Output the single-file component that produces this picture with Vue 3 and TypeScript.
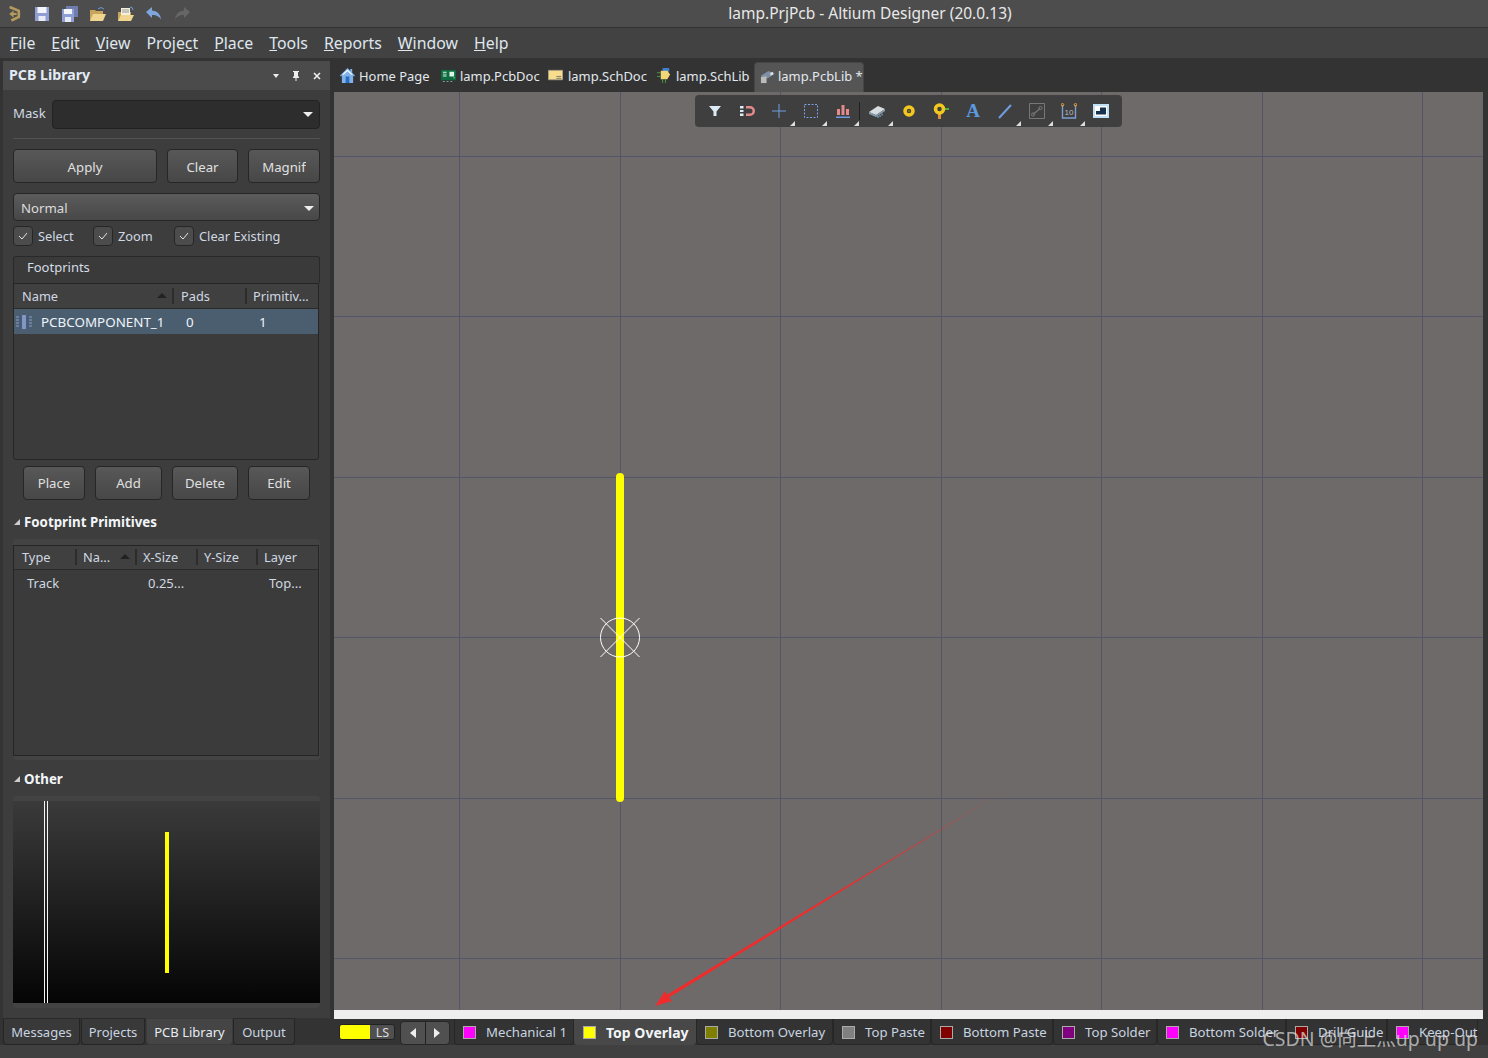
<script setup lang="ts">
const vLines: number[] = [459.5, 620.5, 780.5, 941.5, 1101.5, 1262.5, 1422.5]
const hLines: number[] = [156.5, 316.5, 477.5, 637.5, 798.5, 958.5]
const menus: [string, string][] = [['F', 'ile'], ['E', 'dit'], ['V', 'iew'], ['Proje', 'c|t'], ['P', 'lace'], ['T', 'ools'], ['R', 'eports'], ['W', 'indow'], ['H', 'elp']]
const layers = [
  { name: 'Mechanical 1', color: '#ff00ff', w: 120 },
  { name: 'Top Overlay', color: '#ffff00', active: true, w: 122 },
  { name: 'Bottom Overlay', color: '#808000', w: 137 },
  { name: 'Top Paste', color: '#808080', w: 98 },
  { name: 'Bottom Paste', color: '#800000', w: 122 },
  { name: 'Top Solder', color: '#800080', w: 104 },
  { name: 'Bottom Solder', color: '#ff00ff', w: 129 },
  { name: 'Drill Guide', color: '#800000', w: 101 },
  { name: 'Keep-Out', color: '#ff00ff', w: 91 },
]
const dockTabs = [
  { name: 'Messages', w: 77 },
  { name: 'Projects', w: 64 },
  { name: 'PCB Library', w: 87 },
  { name: 'Output', w: 62 },
]
</script>

<template>
  <div class="app">
    <header class="titlebar">
      <div class="quick">
        <svg class="qi logo" viewBox="0 0 16 20"><path d="M3 2.500L13.500 7v7L5 18" stroke="#b59a5e" stroke-width="3" fill="none"/><path d="M11 10.500H6" stroke="#b59a5e" stroke-width="2.400"/><path d="M7.500 6.500L2.500 10.500l5 4z" fill="#b59a5e"/></svg>
        <svg class="qi" viewBox="0 0 16 16"><path d="M1 1h14v14H1z" fill="#8f9fd6"/><path d="M3.500 1h9v6h-9z" fill="#f4f6fc"/><path d="M4.500 10h7v5h-7z" fill="#e8ebf6"/></svg>
        <svg class="qi" viewBox="0 0 16 16"><path d="M4 0h12v11H4z" fill="#6f7db0"/><path d="M0 3h12v13H0z" fill="#8f9fd6"/><path d="M2 3h8v5H2z" fill="#f4f6fc"/><path d="M3 11h6v5H3z" fill="#e8ebf6"/></svg>
        <svg class="qi" viewBox="0 0 16 16"><path d="M0 4h5l1 1h7v10H0z" fill="#c9a45c"/><path d="M3 8h13l-3 7H0z" fill="#f0d591"/><path d="M8 3q3-3 6 0" stroke="#6f9bd8" fill="none"/></svg>
        <svg class="qi" viewBox="0 0 16 16"><path d="M0 6h13v9H0z" fill="#c9a45c"/><path d="M3 2h9v8H3z" fill="#f4f0e0"/><path d="M4 4h7M4 6h7" stroke="#999"/><path d="M3 9h13l-3 6H0z" fill="#f0d591"/><path d="M12 1q3 0 3 3" stroke="#6f9bd8" fill="none"/></svg>
        <svg class="qi" viewBox="0 0 16 16"><path d="M0 6l6-5v3.500q8 .5 9 9-3-5-9-4.500V12z" fill="#7ea6dc"/></svg>
        <svg class="qi" viewBox="0 0 16 16"><path d="M16 6l-6-5v3.500q-8 .5-9 9 3-5 9-4.500V12z" fill="#666"/></svg>
      </div>
      <div class="apptitle">lamp.PrjPcb - Altium Designer (20.0.13)</div>
    </header>
    <nav class="menubar">
      <span v-for="m in menus" :key="m[0] + m[1]" class="menu">
        <template v-if="m[1] === 'c|t'">Proje<u>c</u>t</template>
        <template v-else><u>{{ m[0] }}</u>{{ m[1] }}</template>
      </span>
    </nav>

    <main class="main">
      <aside class="leftcol">
        <section class="panel">
          <div class="panelhead">
            <b>PCB Library</b>
            <span class="panelctl">
              <i class="tri-down small"></i>
              <svg class="pin" viewBox="0 0 8 10"><path d="M1 0h6v1H6v4l1 1v1H4.500v3h-1V7H1V6l1-1V1H1z" fill="#eee"/></svg>
              <svg class="closex" viewBox="0 0 8 8"><path d="M1 1l6 6M7 1L1 7" stroke="#eee" stroke-width="1.600"/></svg>
            </span>
          </div>
          <div class="panelbody">
            <div class="maskrow">
              <span class="masklabel">Mask</span>
              <div class="maskinput"><i class="tri-down"></i></div>
            </div>
            <div class="sep"></div>
            <div class="btnrow top">
              <button class="btn apply">Apply</button>
              <button class="btn clear">Clear</button>
              <button class="btn magnif"><span>Magnif</span></button>
            </div>
            <div class="select"><span>Normal</span><i class="tri-down"></i></div>
            <div class="checks">
              <label class="check c1"><i class="box"><svg viewBox="0 0 10 8"><path d="M1 4l3 3 5-6" stroke="#e4e4e4" fill="none"/></svg></i>Select</label>
              <label class="check c2"><i class="box"><svg viewBox="0 0 10 8"><path d="M1 4l3 3 5-6" stroke="#e4e4e4" fill="none"/></svg></i>Zoom</label>
              <label class="check"><i class="box"><svg viewBox="0 0 10 8"><path d="M1 4l3 3 5-6" stroke="#e4e4e4" fill="none"/></svg></i>Clear Existing</label>
            </div>
            <div class="grouphead">Footprints</div>
            <div class="table fp">
              <div class="thead fpcols">
                <span class="th first">Name<i class="tri-up"></i></span>
                <span class="th">Pads</span>
                <span class="th">Primitiv...</span>
              </div>
              <div class="selrow fpcols">
                <span class="namecell">
                  <svg class="chip" viewBox="0 0 16 16"><path d="M3 1h10v14H3z" fill="#46597f"/><path d="M6 1h4v14H6z" fill="#8497bd"/><path d="M0 3h3M0 6h3M0 9h3M0 12h3M13 3h3M13 6h3M13 9h3M13 12h3" stroke="#8fa0b8"/></svg>
                  PCBCOMPONENT_1
                </span>
                <span class="cell-a">0</span>
                <span class="cell-b">1</span>
              </div>
            </div>
            <div class="btnrow bottom">
              <button class="btn place">Place</button>
              <button class="btn add">Add</button>
              <button class="btn delete">Delete</button>
              <button class="btn edit">Edit</button>
            </div>
            <div class="sechead fpprim"><i class="corner"></i>Footprint Primitives</div>
            <div class="wrap primwrap">
              <div class="table prim">
                <div class="thead primcols">
                  <span class="th first">Type</span>
                  <span class="th">Na...<i class="tri-up"></i></span>
                  <span class="th">X-Size</span>
                  <span class="th">Y-Size</span>
                  <span class="th">Layer</span>
                </div>
                <div class="primrow primcols">
                  <span>Track</span><span></span><span>0.25...</span><span></span><span>Top...</span>
                </div>
              </div>
            </div>
            <div class="sechead other"><i class="corner"></i>Other</div>
            <div class="wrap prevwrap">
              <div class="preview">
                <i class="wl a"></i><i class="wl b"></i><i class="yl"></i>
              </div>
            </div>
          </div>
        </section>
        <div class="docktabs">
          <span
            v-for="t in dockTabs"
            :key="t.name"
            class="docktab"
            :class="{ on: t.name === 'PCB Library' }"
            :style="{ width: t.w + 'px' }"
          >{{ t.name }}</span>
        </div>
      </aside>

      <div class="rightcol">
        <div class="docbar">
          <span class="doc home">
            <svg class="dicon" viewBox="0 0 16 16"><path d="M8 0L0 8l1 1 1-1v8h12V8l1 1 1-1-3-3V1h-2v2z" fill="#7fb2ea"/><path d="M6 9h4v7H6z" fill="#2c6cc0"/><path d="M8 1.500L2.500 7l1 .5L8 3.500l4.500 4 1-.5z" fill="#fff"/></svg>
            Home Page
          </span>
          <span class="doc pcb">
            <svg class="dicon" viewBox="0 0 16 16"><path d="M0 2h16v11H0z" fill="#0d6b3f"/><path d="M2 4h4v1H2zM2 6h4v1H2zM2 8h4v1H2zM9 4h5v5H9z" fill="#dff5e6"/><path d="M2 14h2v1H2zM6 14h2v1H6zM10 14h2v1h-2zM13 10h2v1h-2z" fill="#8fd0a8"/></svg>
            lamp.PcbDoc
          </span>
          <span class="doc sch">
            <svg class="dicon" viewBox="0 0 16 16"><path d="M.500 2.500h15v10H.500z" fill="#f6dc8b" stroke="#a8a188"/><path d="M9 9h5M9 11h5" stroke="#7a7a6a"/></svg>
            lamp.SchDoc
          </span>
          <span class="doc slib">
            <svg class="dicon" viewBox="0 0 16 16"><path d="M6 0h7v4H6z" fill="#3f7fd0"/><path d="M4 3h7l3 4-3 5H4z" fill="#f2d777"/><path d="M0 5h4M0 9h4M6 12v4M9 12v4" stroke="#4a9a4a"/></svg>
            lamp.SchLib
          </span>
          <span class="doc lib active">
            <svg class="dicon" viewBox="0 0 16 16"><path d="M1 7l8-5 7 3-8 5z" fill="#7c8fa6"/><path d="M1 8h6v7H1z" fill="#bbb"/><path d="M11 4l3-1v3l-3 1z" fill="#ddd"/></svg>
            lamp.PcbLib *
          </span>
        </div>

        <div class="canvas">
          <svg class="board" viewBox="334 92 1149 918">
            <defs>
              <linearGradient id="redfade" gradientUnits="userSpaceOnUse" x1="1012" y1="786" x2="655" y2="1005">
                <stop offset="0" stop-color="#ee2c2c" stop-opacity="0.3"/>
                <stop offset="0.5" stop-color="#ee2c2c" stop-opacity="1"/>
                <stop offset="1" stop-color="#ee2c2c" stop-opacity="1"/>
              </linearGradient>
            </defs>
            <line v-for="x in vLines" :key="'v' + x" :x1="x" :x2="x" y1="92" y2="1010" stroke="#55556a" />
            <line v-for="y in hLines" :key="'h' + y" :y1="y" :y2="y" x1="334" x2="1483" stroke="#55556a" />
            <line x1="620" x2="620" y1="477" y2="798" stroke="#ffff00" stroke-width="8" stroke-linecap="round" />
            <circle cx="620" cy="637.500" r="19.500" fill="none" stroke="#fff" />
            <path d="M600.500 618l39 39M639.500 618l-39 39" stroke="#fff" />
            <path d="M1012 786L669 997.500l3 3.500L655 1006l10-15 2 3.700z" fill="url(#redfade)" />
          </svg>
          <div class="toolbar">
            <span class="tb">
              <svg viewBox="0 0 16 16"><path d="M2 3h12L9.500 8.500V13h-3V8.500z" fill="#dcebf5"/></svg>
            </span>
            <span class="tb">
              <svg viewBox="0 0 16 16"><path d="M7 3h4a5 5 0 010 10H7v-2.500h4a2.500 2.500 0 000-5H7z" fill="#e48a8a"/><path d="M1 3h3.500v2.500H1zM1 7h3.500v2H1zM1 10.500h3.500V13H1z" fill="#dcebf5"/></svg>
            </span>
            <span class="tb more">
              <svg viewBox="0 0 16 16"><path d="M8 1v14M1 8h14" stroke="#6f9de0"/></svg>
            </span>
            <span class="tb more">
              <svg viewBox="0 0 16 16"><path d="M1.500 1.500h13v13h-13z" fill="none" stroke="#7d9fe8" stroke-dasharray="2 1.500"/></svg>
            </span>
            <span class="tb more">
              <svg viewBox="0 0 16 16"><path d="M2 6h3v6H2zM6.500 2h3v10h-3zM11 6h3v6h-3z" fill="#e48a8a"/><path d="M1 13.500h14V15H1z" fill="#6f9de0"/></svg>
            </span>
            <i class="tbsep"></i>
            <span class="tb more">
              <svg viewBox="0 0 16 16"><path d="M0 9l9-6 7 3-9 6z" fill="#d8dde2"/><path d="M0 9l7 3v2l-7-3zM7 12l9-6v2l-9 6z" fill="#8a9bab"/><path d="M9 13v2M11 12v2M13 10.500v2" stroke="#7ec0e8"/></svg>
            </span>
            <span class="tb">
              <svg viewBox="0 0 16 16"><circle cx="8" cy="8" r="4" fill="none" stroke="#f3c81e" stroke-width="3.500"/><circle cx="8" cy="8" r="1.300" fill="#7a6a20"/></svg>
            </span>
            <span class="tb">
              <svg viewBox="0 0 16 16"><path d="M10 5h6v2h-6z" fill="#45b035"/><path d="M5 10h3v6H5z" fill="#e0903a"/><circle cx="6.500" cy="6" r="4" fill="none" stroke="#f3c81e" stroke-width="3.500"/></svg>
            </span>
            <span class="tb letter">A</span>
            <span class="tb more">
              <svg viewBox="0 0 16 16"><path d="M2 15L14 2" stroke="#6f9de0" stroke-width="2"/></svg>
            </span>
            <span class="tb more">
              <svg viewBox="0 0 16 16"><path d="M.500.500h15v15H.500z" fill="none" stroke="#777"/><path d="M4 11.500l7-6" stroke="#777" stroke-width="1.200"/><circle cx="4" cy="11.500" r="1.600" fill="none" stroke="#777"/><circle cx="11.500" cy="5" r="1.600" fill="none" stroke="#777"/></svg>
            </span>
            <span class="tb more">
              <svg viewBox="0 0 16 16"><path d="M1.500 2v13h13V2" fill="none" stroke="#7d9fd0" stroke-width="1.400"/><circle cx="1.500" cy="1.800" r="1.300" fill="none" stroke="#e8a030"/><circle cx="14.500" cy="1.800" r="1.300" fill="none" stroke="#e8a030"/><text x="8" y="11.500" text-anchor="middle" class="ten">10</text></svg>
            </span>
            <span class="tb">
              <svg viewBox="0 0 16 16"><path d="M0 1h16v14H0z" fill="#bfe0f5"/><path d="M2 3h12v10H2z" fill="#fff"/><path d="M7 4.500h6v7H3V8h4z" fill="#16324f"/></svg>
            </span>
          </div>
        </div>
        <div class="strip"></div>

        <div class="layerbar">
          <div class="ls"><i class="lsswatch"></i><span>LS</span></div>
          <div class="navbtns">
            <span class="nav"><i class="tri-left"></i></span>
            <span class="nav"><i class="tri-right"></i></span>
          </div>
          <span
            v-for="l in layers"
            :key="l.name"
            class="layer"
            :class="{ active: l.active }"
            :style="{ width: l.w + 'px' }"
          >
            <i class="lsq" :style="{ background: l.color }"></i>{{ l.name }}
          </span>
          <span class="watermark">CSDN @向上灬up up up</span>
        </div>
      </div>
    </main>
    <footer class="status"></footer>
  </div>
</template>

<style>
html, body { margin: 0; padding: 0; background: #333; }
</style>

<style scoped>
.app {
  width: 1488px;
  height: 1058px;
  display: flex;
  flex-direction: column;
  overflow: hidden;
  background: #333;
  color: #dcdcdc;
  font: 14px "Noto Sans", "Noto Sans CJK SC", sans-serif;
}
.titlebar {
  height: 27px;
  flex: none;
  background: #4d4d4d;
  border-bottom: 1px solid #333;
  display: flex;
  align-items: center;
  position: relative;
}
.quick { display: flex; align-items: center; padding-left: 7px; }
.qi { width: 16px; height: 16px; margin-right: 12px; display: block; }
.qi.logo { width: 14px; height: 19px; margin-right: 13px; }
.apptitle {
  width: 100%;
  position: absolute;
  left: 126px;
  text-align: center;
  font-size: 15.500px;
  color: #e8e8e8;
  top: 2px;
}
.menubar {
  height: 30px;
  flex: none;
  background: #424242;
  display: flex;
  align-items: center;
  gap: 16px;
  padding-left: 10px;
  font-size: 15.850px;
  color: #dfe6ee;
}
.main { flex: 1; display: flex; min-height: 0; }
.leftcol { width: 334px; flex: none; display: flex; flex-direction: column; padding-top: 3px; box-sizing: border-box; }
.panel { flex: 1; margin-left: 3px; width: 327px; background: #3d3d3d; display: flex; flex-direction: column; min-height: 0; }
.panelhead {
  height: 29px;
  flex: none;
  box-sizing: border-box;
  background: #4b4b4b;
  display: flex;
  align-items: center;
  justify-content: space-between;
  padding: 0 9px 3px 6px;
  font-size: 14.200px;
  color: #e2ecf6;
}
.panelctl { display: flex; align-items: center; gap: 13px; padding-top: 3px; }
.pin { width: 8px; height: 10px; }
.closex { width: 8px; height: 8px; }
.tri-down { display: block; width: 0; height: 0; border: 5px solid transparent; border-top: 5px solid #eee; border-bottom: 0; }
.tri-down.small { border-width: 4px 3.500px 0; border-top-color: #eee; border-bottom: 0; }
.tri-up { display: inline-block; width: 0; height: 0; border: 5px solid transparent; border-bottom: 5px solid #222; border-top: 0; }
.tri-left { display: block; width: 0; height: 0; border: 5px solid transparent; border-right: 6px solid #eee; border-left: 0; }
.tri-right { display: block; width: 0; height: 0; border: 5px solid transparent; border-left: 6px solid #eee; border-right: 0; }
.panelbody { flex: 1; padding: 0 10px; display: flex; flex-direction: column; font-size: 13.200px; }
.maskrow { height: 29px; margin-top: 10px; display: flex; align-items: center; flex: none; }
.masklabel { width: 39px; color: #cfd8e2; padding-bottom: 3px; }
.maskinput {
  flex: 1; height: 29px; box-sizing: border-box; background: #2d2d2d; border: 1px solid #222; border-radius: 4px;
  display: flex; align-items: center; justify-content: flex-end; padding-right: 6px;
}
.sep { height: 1px; background: #525252; margin-top: 9px; flex: none; }
.btnrow { display: flex; flex: none; }
.btnrow.top { margin-top: 10px; height: 34px; gap: 10px; }
.btnrow.bottom { margin-top: 6px; height: 34px; gap: 10px; padding-left: 10px; }
.btn {
  box-sizing: border-box;
  padding: 0;
  font: inherit;
  color: #e0e0e0;
  border: 1px solid #262626;
  border-radius: 4px;
  background: linear-gradient(#585858, #474747);
}
.btnrow.top .btn { padding-top: 2px; }
.apply { width: 144px; }
.clear { width: 71px; }
.magnif { width: 72px; }
.magnif span { display: block; width: 44px; margin-left: 13px; overflow: hidden; white-space: nowrap; }
.place { width: 62px; }
.add { width: 67px; }
.delete { width: 66px; }
.edit { width: 62px; }
.select {
  margin-top: 10px; height: 28px; flex: none; box-sizing: border-box;
  border: 1px solid #262626; border-radius: 4px; background: linear-gradient(#5c5c5c, #474747);
  display: flex; align-items: center; justify-content: space-between; padding: 2px 5px 0 7px;
}
.checks { display: flex; height: 20px; margin-top: 5px; flex: none; align-items: center; font-size: 12.800px; color: #cfd8e2; }
.check { display: flex; align-items: center; gap: 5px; }
.c1 { width: 80px; }
.c2 { width: 81px; }
.box {
  width: 20px; height: 20px; box-sizing: border-box; border: 1px solid #262626; border-radius: 4px; background: #4c4c4c;
  display: flex; align-items: center; justify-content: center;
}
.box svg { width: 10px; height: 8px; }
.grouphead {
  margin-top: 10px; height: 27px; box-sizing: border-box; flex: none; padding: 1px 0 0 13px;
  border: 1px solid #292929; border-bottom: 0; border-radius: 3px 3px 0 0; background: #3a3a3a; font-size: 13px; color: #d4dce4;
}
.table { box-sizing: border-box; border: 1px solid #252525; margin-right: 1px; flex: none; background: #3b3b3b; }
.table.fp { height: 177px; border-radius: 0 0 3px 3px; }
.thead { height: 25px; background: #404040; border-bottom: 1px solid #2a2a2a; box-sizing: border-box; align-items: center; font-size: 12.800px; color: #cfd8e2; }
.prim .thead { height: 24px; padding-bottom: 2px; }
.fpcols { display: grid; grid-template-columns: 158px 73px 1fr; }
.primcols { display: grid; grid-template-columns: 61px 60px 61px 60px 1fr; }
.th { position: relative; padding-left: 6px; border-left: 2px solid #2c2c2c; height: 16px; line-height: 16px; white-space: nowrap; }
.th.first { border-left: 0; padding-left: 8px; display: block; }
.fpcols .th + .th { padding-left: 7px; }
.fpcols .th + .th + .th { padding-left: 6px; }
.th .tri-up { position: absolute; right: 5px; top: 5px; }
.selrow { height: 25px; align-items: center; background: #4b5e70; color: #eef3f8; font-size: 13.400px; }
.namecell { display: flex; align-items: center; gap: 9px; padding-left: 2px; white-space: nowrap; }
.chip { width: 16px; height: 16px; flex: none; }
.cell-a { padding-left: 14px; }
.cell-b { padding-left: 14px; }
.sechead { flex: none; font-weight: 700; font-size: 13.300px; color: #f2f5f8; display: flex; align-items: center; gap: 4px; }
.fpprim { margin-top: 12px; height: 20px; }
.other { margin-top: 9px; height: 20px; }
.corner { display: block; width: 0; height: 0; border-style: solid; border-width: 0 0 6px 6px; border-color: transparent transparent #ccc transparent; margin-left: 1px; }
.wrap { flex: none; background: #434343; border-radius: 3px; margin-top: 7px; }
.primwrap { height: 221px; padding-top: 6px; box-sizing: border-box; }
.table.prim { height: 211px; }
.primrow { padding-top: 4px; font-size: 13px; color: #d0d8e0; }
.primrow span { padding-left: 13px; white-space: nowrap; }
.prevwrap { height: 212px; padding-top: 5px; box-sizing: border-box; margin-top: 7px; }
.preview { height: 202px; background: linear-gradient(#3a3a3a, #050505); position: relative; }
.wl { position: absolute; top: 0; bottom: 0; width: 1px; background: #f5f5f5; }
.wl.a { left: 31px; }
.wl.b { left: 33.500px; }
.yl { position: absolute; left: 152px; top: 31px; width: 4px; height: 141px; background: #ffff00; }
.docktabs { height: 27px; flex: none; background: #333; display: flex; padding-left: 3px; align-items: stretch; }
.docktab {
  box-sizing: border-box; display: flex; align-items: center; justify-content: center; flex: none; font-size: 13px; color: #c8d4e0; white-space: nowrap;
  border: 1px solid #252525; border-top-color: #2a2a2a; border-radius: 0 0 4px 4px; margin-right: 1px; background: #393939;
}
.docktab.on { background: #454545; color: #e6edf4; border-color: #3a3a3a; margin-right: 0; }
.rightcol { flex: 1; display: flex; flex-direction: column; min-width: 0; }
.docbar { height: 34px; flex: none; background: #333; display: flex; align-items: flex-end; font-size: 12.950px; color: #e2e8ee; }
.doc { display: flex; align-items: center; height: 30px; gap: 4px; white-space: nowrap; padding: 0 2px 3px 0; box-sizing: border-box; flex: none; }
.dicon { width: 15px; height: 15px; flex: none; }
.home { margin-left: 6px; width: 101px; }
.pcb { width: 107px; }
.sch { width: 109px; }
.sch .dicon { margin-right: 1px; }
.slib { width: 97px; }
.lib { width: 110px; padding-left: 5px; padding-right: 0; gap: 3px; }
.active.lib { background: #555; border-radius: 4px 4px 0 0; border: 1px solid #464646; border-bottom: 0; }
.canvas { flex: 1; position: relative; margin-right: 5px; background: #6e6a69; min-height: 0; }
.board { position: absolute; left: 0; top: 0; width: 1149px; height: 918px; display: block; }
.toolbar {
  position: absolute; left: 361px; top: 3px; height: 32px; box-sizing: border-box;
  background: #3f3f3f; border-radius: 4px; padding-left: 4px; display: flex; align-items: center;
}
.tb { width: 32px; height: 32px; display: flex; align-items: center; justify-content: center; position: relative; }
.tb svg { width: 16px; height: 16px; }
.tb.more::after {
  content: ""; position: absolute; right: 0; bottom: 1px; width: 0; height: 0;
  border-style: solid; border-width: 0 0 5px 5px; border-color: transparent transparent #ddd transparent;
}
.tbsep { width: 1px; height: 18px; background: #222; margin-right: 1px; }
.toolbar .tb:last-child { margin-right: 5px; }
.letter { color: #5b9ae0; font: 700 19px "Liberation Serif", serif; }
.ten { font: 8px "Liberation Sans", sans-serif; fill: #bbb; }
.strip { height: 9px; flex: none; background: #eeeeee; margin-right: 5px; }
.layerbar {
  height: 26px; flex: none; background: #333; display: flex; align-items: stretch; padding-left: 5px;
  position: relative; font-size: 13.200px; color: #c8d4e0;
}
.ls {
  margin-top: 5px; height: 16px; width: 56px; flex: none; display: flex; box-sizing: border-box; border: 1px solid #222; border-radius: 3px;
  background: #505050; overflow: hidden; font-size: 12.500px; color: #ddd;
}
.lsswatch { width: 30px; background: #ffff00; flex: none; }
.ls span { width: 25px; flex: none; text-align: center; line-height: 15px; }
.navbtns {
  margin: 2px 0 0 5px; width: 50px; height: 24px; flex: none; display: flex; box-sizing: border-box; border: 1px solid #262626; border-radius: 4px;
  background: #505050;
}
.nav { flex: 1; display: flex; align-items: center; justify-content: center; }
.nav + .nav { border-left: 1px solid #222; }
.layer {
  display: flex; align-items: center; gap: 10px; padding: 1px 0 0 8px; white-space: nowrap; box-sizing: border-box; flex: none;
  border: 1px solid #272727; border-top: 0; border-radius: 0 0 4px 4px; background: #333;
}
.navbtns + .layer { margin-left: 4px; }
.layer.active { background: #484848; font-weight: 700; font-size: 14px; color: #f2f5f8; border-color: #484848; }
.lsq { width: 13px; height: 13px; box-sizing: border-box; border: 1px solid #aaa; flex: none; display: block; }
.watermark {
  position: absolute; right: 10px; top: 4px; font-size: 19.500px; color: rgba(225, 225, 225, 0.7);
  white-space: nowrap;
}
.status { height: 13px; flex: none; background: #404040; }
</style>
